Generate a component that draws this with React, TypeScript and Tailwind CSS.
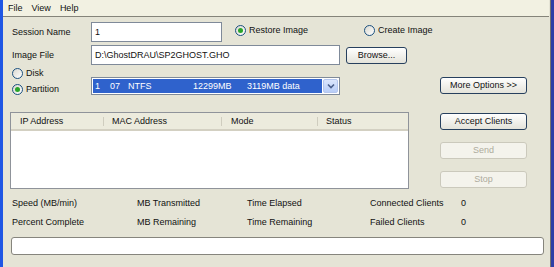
function Radio({ checked }: { checked?: boolean }) {
  return (
    <span className="w-[11px] h-[11px] shrink-0 rounded-full border border-[#1c5180] bg-linear-to-br from-[#d9d8d0] to-white flex items-center justify-center">
      {checked && <span className="w-[5px] h-[5px] rounded-full bg-[#2aa52a]" />}
    </span>
  );
}

function Btn({ children, disabled, className = "" }: { children: string; disabled?: boolean; className?: string }) {
  return (
    <div
      className={`${className} h-[17px] w-[87px] shrink-0 rounded-[3px] border flex items-center justify-center ${
        disabled
          ? "border-[#cbc9bc] bg-[#f4f3ec] text-[#aeab9c]"
          : "border-[#27405e] bg-linear-to-b from-white to-[#e4e3da]"
      }`}
    >
      {children}
    </div>
  );
}

export default function App() {
  return (
    <div className="w-[554px] h-[267px] flex overflow-hidden bg-[#e5e4d6] text-[9px] leading-none text-[#111] font-['Liberation_Sans',Arial,sans-serif]">
      <div className="w-[3px] shrink-0 bg-[#1f56e4]" />

      <div className="flex-1 flex flex-col">
        {/* menu */}
        <div className="h-[17px] shrink-0 bg-[#f2f1e2] border-b border-[#85847a] flex items-center pl-[5px] gap-[9px]">
          <span>File</span>
          <span>View</span>
          <span>Help</span>
        </div>

        {/* session name */}
        <div className="mt-[5px] h-[20px] flex items-center">
          <span className="pl-[9px] w-[88px] shrink-0">Session Name</span>
          <div className="w-[131px] h-[20px] shrink-0 bg-white border border-[#7f8a99] flex items-center pl-[3px]">1</div>
          <div className="self-start pt-[3px] ml-[13px] w-[129px] shrink-0 flex items-center gap-[3px]">
            <Radio checked />
            <span>Restore Image</span>
          </div>
          <div className="self-start pt-[3px] flex items-center gap-[3px]">
            <Radio />
            <span>Create Image</span>
          </div>
        </div>

        {/* image file */}
        <div className="mt-[3px] h-[20px] flex items-center">
          <span className="pl-[9px] w-[88px] shrink-0">Image File</span>
          <div className="w-[249px] h-[20px] shrink-0 bg-white border border-[#7f8a99] flex items-center pl-[3px]">
            D:\GhostDRAU\SP2GHOST.GHO
          </div>
          <Btn className="ml-[6px] !w-[61px]">Browse...</Btn>
        </div>

        {/* disk / partition */}
        <div className="h-[32px] flex">
          <div className="w-[88px] shrink-0 pl-[9px] flex flex-col">
            <div className="h-[16px] flex items-center gap-[3px]">
              <Radio />
              <span>Disk</span>
            </div>
            <div className="h-[16px] flex items-center gap-[3px]">
              <Radio checked />
              <span>Partition</span>
            </div>
          </div>
          <div className="mt-[12px] w-[249px] h-[18px] shrink-0 bg-white border border-[#7f8a99] p-[1px] flex">
            <div className="flex-1 bg-[#2f62cc] text-white flex items-center pl-[2px] whitespace-pre">
              <span className="w-[15px]">1</span>
              <span className="w-[18px]">07</span>
              <span className="w-[65px]">NTFS</span>
              <span className="w-[54px]">12299MB</span>
              <span>3119MB data</span>
            </div>
            <div className="ml-[1px] w-[15px] rounded-[2px] border border-[#b4c6ee] bg-linear-to-b from-[#dbe6fd] to-[#b8cdf7] flex items-center justify-center">
              <svg width="8" height="6" viewBox="0 0 8 6">
                <path d="M1 1.5 L4 4.5 L7 1.5" fill="none" stroke="#4a5f8c" strokeWidth="1.6" />
              </svg>
            </div>
          </div>
          <Btn className="ml-[100px] mt-[12px]">More Options &gt;&gt;</Btn>
        </div>

        {/* client list + actions */}
        <div className="mt-[15px] flex">
          <div className="ml-[7px] w-[399px] h-[77px] shrink-0 bg-white border border-[#8f939a] flex flex-col">
            <div className="h-[18px] bg-[#ecebdd] border-b-2 border-[#d3d0c2] flex items-center">
              <span className="w-[93px] pl-[9px] border-r border-[#cfcdbf]">IP Address</span>
              <span className="w-[118px] pl-[8px] border-r border-[#cfcdbf]">MAC Address</span>
              <span className="w-[96px] pl-[9px] border-r border-[#cfcdbf]">Mode</span>
              <span className="pl-[8px]">Status</span>
            </div>
          </div>
          <div className="ml-[31px] pt-[1px] flex flex-col gap-[12px]">
            <Btn>Accept Clients</Btn>
            <Btn disabled>Send</Btn>
            <Btn disabled>Stop</Btn>
          </div>
        </div>

        {/* stats */}
        <div className="mt-[5px] pl-[9px] grid grid-cols-[125px_110px_123px_91px_1fr] auto-rows-[19px] items-center">
          <span>Speed (MB/min)</span>
          <span>MB Transmitted</span>
          <span>Time Elapsed</span>
          <span>Connected Clients</span>
          <span>0</span>
          <span>Percent Complete</span>
          <span>MB Remaining</span>
          <span>Time Remaining</span>
          <span>Failed Clients</span>
          <span>0</span>
        </div>

        {/* progress */}
        <div className="mt-[5px] ml-[8px] w-[533px] h-[18px] shrink-0 rounded-[3px] border border-[#86857d] bg-white" />
      </div>

      <div className="w-[5px] shrink-0 flex">
        <div className="w-[1px] bg-[#e5e4d6]" />
        <div className="w-[1px] bg-[#77766d]" />
        <div className="flex-1 bg-[#2e3fa6]" />
      </div>
    </div>
  );
}
